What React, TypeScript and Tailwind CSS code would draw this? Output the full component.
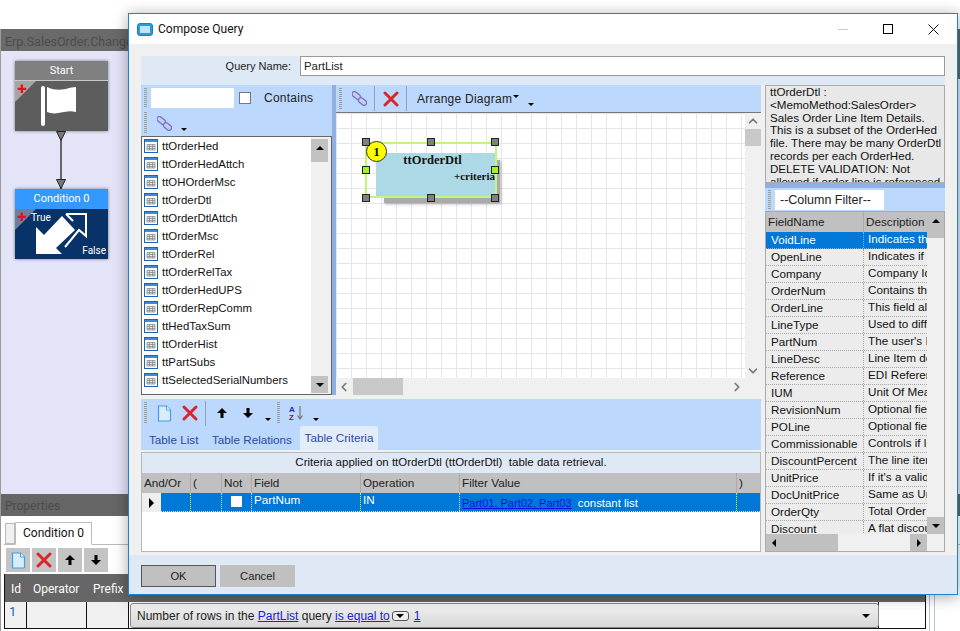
import { ChevronDown, ChevronLeft, ChevronRight, ChevronUp } from 'lucide-react';

const tables = [
  'ttOrderHed',
  'ttOrderHedAttch',
  'ttOHOrderMsc',
  'ttOrderDtl',
  'ttOrderDtlAttch',
  'ttOrderMsc',
  'ttOrderRel',
  'ttOrderRelTax',
  'ttOrderHedUPS',
  'ttOrderRepComm',
  'ttHedTaxSum',
  'ttOrderHist',
  'ttPartSubs',
  'ttSelectedSerialNumbers',
];

const fields = [
  ['VoidLine', 'Indicates that the line'],
  ['OpenLine', 'Indicates if the line'],
  ['Company', 'Company Identifier'],
  ['OrderNum', 'Contains the order'],
  ['OrderLine', 'This field along'],
  ['LineType', 'Used to differ'],
  ['PartNum', "The user's Id"],
  ['LineDesc', 'Line Item desc'],
  ['Reference', 'EDI Reference'],
  ['IUM', 'Unit Of Measure'],
  ['RevisionNum', 'Optional field'],
  ['POLine', 'Optional field'],
  ['Commissionable', 'Controls if line'],
  ['DiscountPercent', 'The line item'],
  ['UnitPrice', "If it's a valid"],
  ['DocUnitPrice', 'Same as Unit'],
  ['OrderQty', 'Total Order'],
  ['Discount', 'A flat discount'],
];

const grip =
  'w-[3px] shrink-0 bg-[repeating-linear-gradient(to_bottom,#9c9c9c_0,#9c9c9c_1px,transparent_1px,transparent_2px)]';

const TableIcon = () => (
  <svg width="14" height="14" viewBox="0 0 14 14" className="shrink-0">
    <rect x="0.5" y="0.5" width="13" height="13" fill="#fff" stroke="#1c62b8" />
    <rect x="1" y="1" width="12" height="2" fill="#3f8ae0" />
    <path d="M3 5.5h8v5.5H3zM3 7.5h8M3 9.5h8M5.5 5.5v5.5M8.5 5.5v5.5" fill="#e8e8e8" stroke="#8a8a8a" strokeWidth="0.8" />
  </svg>
);

const NewDoc = () => (
  <svg width="15" height="17" viewBox="0 0 15 17">
    <path d="M1.5 1h8l4 4v10a1 1 0 0 1-1 1h-11z" fill="#d8ecfb" stroke="#3ca0ea" strokeWidth="1.2" />
    <path d="M9.5 1v4h4" fill="#fff" stroke="#3ca0ea" />
  </svg>
);

const RedX = () => (
  <svg width="16" height="16" viewBox="0 0 16 16">
    <path d="M2 2l12 12M14 2L2 14" stroke="#d9262c" strokeWidth="3" strokeLinecap="round" />
  </svg>
);

const Arrow = ({ down = false }: { down?: boolean }) => (
  <svg width="10" height="10" viewBox="0 0 10 10">
    <path d={down ? 'M3.5 0h3v5H10L5 10 0 5h3.500z' : 'M3.5 10h3V5H10L5 0 0 5h3.500z'} fill="#000" />
  </svg>
);

const LinkIcon = () => (
  <svg width="15" height="15" viewBox="0 0 15 15">
    <rect x="-0.5" y="2" width="9.500" height="5" rx="2.500" transform="rotate(40 4.250 4.500)" fill="#c9cbf0" stroke="#7275c4" strokeWidth="1.300" />
    <rect x="6" y="8" width="9" height="5" rx="2.500" transform="rotate(40 10.500 10.500)" fill="#c9cbf0" stroke="#7275c4" strokeWidth="1.300" />
  </svg>
);

const Caret = () => <div className="w-0 h-0 border-x-[3px] border-x-transparent border-t-[3px] border-t-black" />;

const ScrollCaret = ({ up = false }: { up?: boolean }) => (
  <div className={`w-0 h-0 border-x-[4px] border-x-transparent ${up ? 'border-b-[4px] border-b-black' : 'border-t-[4px] border-t-black'}`} />
);

const Handle = ({ cls, green = false }: { cls: string; green?: boolean }) => (
  <div className={`absolute w-[8px] h-[8px] border border-[#222] ${green ? 'bg-[#a4f028]' : 'bg-[#808080]'} ${cls}`} />
);

const CornerPlus = ({ color }: { color: string }) => (
  <>
    <div className={`absolute left-0 top-[20px] w-0 h-0 border-t-[21px] border-r-[21px] border-r-transparent ${color}`} />
    <div className="absolute left-[2px] top-[22px] text-[#e8101c] font-black text-[17px] leading-[11px]">+</div>
  </>
);

const ConnectorHead = ({ cls }: { cls: string }) => (
  <svg width="10" height="10" viewBox="0 0 10 10" className={`absolute left-[41px] ${cls}`}>
    <path d="M0.500 0.500h9L5 9.500z" fill="#777" stroke="#222" />
  </svg>
);

function Backdrop() {
  return (
    <div className="flex flex-col h-[631px] border-l border-l-[#9a9a9a] bg-white">
      <div className="h-[29px] shrink-0 bg-white -ml-px" />
      <div className="h-[22px] shrink-0 bg-[#6a6a6a] text-[#4c4c4c] text-[12.5px] leading-[26px] pl-[4px] whitespace-nowrap overflow-hidden font-['Roboto',sans-serif]">
        Erp.SalesOrder.ChangePartNum
      </div>
      <div className="h-[443px] shrink-0 bg-[#e3e4f8] pl-[14px] pt-[10px] flex flex-col items-start">
        <div className="relative w-[93px] h-[70px] bg-[#5d5d5d] shadow-[0_0_3px_rgba(0,0,0,0.5)]">
          <div className="h-[20px] bg-[#808080] border-b border-b-[#c8c8c8] text-white text-[11px] leading-[19px] text-center font-['Roboto',sans-serif]">
            Start
          </div>
          <CornerPlus color="border-t-[#a6a6a6]" />
          <svg width="45" height="42" viewBox="0 0 45 42" className="absolute left-[26px] top-[24px]">
            <rect x="0" y="1" width="4" height="40" rx="2" fill="#fff" />
            <path d="M6 2c8 4 16 3 22 1 4-1 6-1 7-1v25c-6-2-12 0-18 1-4 1-8 0-11-1z" fill="#fff" />
          </svg>
        </div>
        <div className="relative w-[93px] h-[58px] shrink-0">
          <div className="absolute left-[45px] top-0 w-[2px] h-full bg-[#666]" />
          <ConnectorHead cls="top-0" />
          <ConnectorHead cls="bottom-0" />
        </div>
        <div className="relative w-[93px] h-[70px] bg-[#083369] shadow-[0_0_3px_rgba(0,0,0,0.5)]">
          <div className="h-[20px] bg-[#3399ff] text-white text-[11px] leading-[19px] text-center font-['Roboto',sans-serif]">
            Condition 0
          </div>
          <CornerPlus color="border-t-[#6b7f9e]" />
          <div className="absolute left-[16px] top-[21px] text-white text-[10px] font-['Roboto',sans-serif]">True</div>
          <div className="absolute right-[2px] bottom-[1px] text-white text-[10px] font-['Roboto',sans-serif]">False</div>
          <svg width="60" height="50" viewBox="0 0 60 50" className="absolute left-[15px] top-[20px]">
            <path d="M6 18l8 8L32 7l13 14-19 18 6 6H6z" fill="#fff" />
            <path d="M36 5h20v22l-7-6-14 17M36 5l7 7" fill="none" stroke="#fff" strokeWidth="2" />
          </svg>
        </div>
      </div>
      <div className="h-[22px] shrink-0 bg-[#666] text-[#4c4c4c] text-[12px] leading-[24px] pl-[4px] font-['Roboto',sans-serif]">Properties</div>
      <div className="flex-1 flex flex-col pl-[3px] font-['Roboto',sans-serif]">
        <div className="h-[29px] shrink-0 flex items-end border-b border-b-[#bbb] pl-[1px]">
          <div className="w-[10px] h-[21px] border border-[#bbb] bg-[#f0f0f0]" />
          <div className="w-[77px] h-[23px] -mb-px border border-[#bbb] border-b-white bg-white text-[12px] text-[#111] leading-[21px] text-center">Condition 0</div>
        </div>
        <div className="h-[24px] shrink-0 flex gap-[2px] pl-[2px] mt-[3px]">
          <div className="w-[24px] h-full bg-[#c4c4c4] flex items-center justify-center"><NewDoc /></div>
          <div className="w-[24px] h-full bg-[#c4c4c4] flex items-center justify-center"><RedX /></div>
          <div className="w-[24px] h-full bg-[#c4c4c4] flex items-center justify-center"><Arrow /></div>
          <div className="w-[24px] h-full bg-[#c4c4c4] flex items-center justify-center"><Arrow down /></div>
        </div>
        <div className="w-[922px] mt-[2px] border-x border-x-[#111] border-b border-b-[#111]">
          <div className="h-[28px] bg-[#666] flex text-white text-[12px] leading-[30px]">
            <div className="w-[22px] pl-[6px]">Id</div>
            <div className="w-[60px] pl-[6px]">Operator</div>
            <div className="w-[42px] pl-[6px]">Prefix</div>
          </div>
          <div className="h-[26px] flex bg-white text-[13px]">
            <div className="w-[22px] bg-[#f0f0f0] border-r border-r-[#111] pl-[4px] text-[#1a5fb4]">1</div>
            <div className="w-[60px] bg-[#f0f0f0] border-r border-r-[#111]" />
            <div className="w-[42px] bg-[#f0f0f0] border-r border-r-[#111]" />
            <div className="flex-1 border-r border-r-[#111]" />
            <div className="w-[46px]" />
          </div>
        </div>
      </div>
      <div className="absolute right-0 top-[29px] w-[2px] h-[50px] bg-[#666]" />
      <div className="absolute left-[929px] top-[595px] w-px h-[36px] bg-[#b8c4dc]" />
      <div className="absolute left-[934px] top-[595px] w-px h-[36px] bg-[#b8c4dc]" />
    </div>
  );
}

function Combo() {
  return (
    <div className="absolute left-[130px] top-[603px] w-[749px] h-[25px] rounded-[3px] border border-[#8a8a8a] bg-[linear-gradient(#f4f4f4,#e4e4e4_50%,#d8d8d8)] flex items-center pl-[6px] pr-[8px] text-[12px] text-[#222] font-['Liberation_Sans',sans-serif] whitespace-pre">
      <span>Number of rows in the </span>
      <span className="text-[#2020e0] underline">PartList</span>
      <span> query </span>
      <span className="text-[#2020e0] underline">is equal to</span>
      <span className="ml-[2px] w-[17px] h-[10px] rounded-[3px] border border-[#555] bg-[#eee] flex items-center justify-center"><ScrollCaret /></span>
      <span className="ml-[5px] text-[#2020e0] underline">1</span>
      <span className="ml-auto"><ScrollCaret /></span>
    </div>
  );
}

function LeftPane() {
  return (
    <div className="w-[191px] shrink-0 flex flex-col">
      <div className="h-[51px] bg-[#bcd8fd] shrink-0 flex flex-col">
        <div className="flex items-center h-[25px] pl-[3px]">
          <div className={`${grip} h-[20px]`} />
          <div className="ml-[4px] w-[83px] h-[20px] bg-white" />
          <div className="ml-[5px] w-[12px] h-[12px] border border-[#777] bg-white" />
          <span className="ml-[13px] text-[12px] tracking-[0.25px] text-[#222]">Contains</span>
        </div>
        <div className="flex items-center h-[26px] pl-[3px]">
          <div className={`${grip} h-[22px]`} />
          <div className="ml-[10px]"><LinkIcon /></div>
          <div className="ml-[9px] mt-[12px]"><Caret /></div>
        </div>
      </div>
      <div className="flex-1 min-h-0 flex bg-white border border-[#666] overflow-hidden">
        <div className="w-[169px] shrink-0 text-[11.4px]">
          {tables.map((t) => (
            <div key={t} className="h-[18px] flex items-center pl-[2px] gap-[4px] text-[#111] whitespace-nowrap">
              <TableIcon />
              <span className="pt-[2px]">{t}</span>
            </div>
          ))}
        </div>
        <div className="w-[20px] bg-[#f0f0f0] flex flex-col pr-[3px] pt-[2px] pb-[1px]">
          <div className="h-[23px] bg-[#c2c2c2] flex justify-center pt-[7px]"><ScrollCaret up /></div>
          <div className="flex-1" />
          <div className="h-[17px] bg-[#c2c2c2] flex justify-center items-center"><ScrollCaret /></div>
        </div>
      </div>
    </div>
  );
}

function Diagram() {
  return (
    <div className="flex-1 flex flex-col min-w-0">
      <div className="h-[27px] bg-[#bcd8fd] shrink-0 flex items-center pl-[3px]">
        <div className={`${grip} h-[22px]`} />
        <div className="ml-[10px]"><LinkIcon /></div>
        <div className="ml-[7px] w-px h-[25px] bg-[#8ea2bd]" />
        <div className="ml-[8px]"><RedX /></div>
        <div className="ml-[7px] w-px h-[25px] bg-[#8ea2bd]" />
        <span className="ml-[10px] text-[12px] tracking-[0.25px] text-[#222]">Arrange Diagram</span>
        <div className="ml-[1px] mb-[4px]"><Caret /></div>
        <div className="ml-[9px] mt-[12px]"><Caret /></div>
      </div>
      <div className="flex-1 min-h-0 border-t border-t-[#777] flex flex-col bg-[#f0f0f0]">
        <div className="flex-1 min-h-0 flex">
          <div className="relative flex-1 bg-white bg-[linear-gradient(#e6e6e6_1px,transparent_1px),linear-gradient(90deg,#e6e6e6_1px,transparent_1px)] bg-[size:15px_15px] font-['Liberation_Serif',serif] font-bold text-[#111]">
            <div className="absolute left-[48px] top-[47px] w-[116px] h-[43px] bg-[#aaa] shadow-[1px_1px_3px_rgba(0,0,0,0.3)]" />
            <div className="absolute left-[40px] top-[40px] w-[121px] h-[44px] bg-[#add8e6]" />
            <div className="absolute left-[40px] top-[40px] w-[121px] text-center text-[12.5px] leading-[15px] pr-[8px]">ttOrderDtl</div>
            <div className="absolute left-[40px] top-[56px] w-[119px] text-right text-[11px] leading-[14px]">+criteria</div>
            <div className="absolute left-[29px] top-[29px] w-[132px] h-[56px] border-2 border-[#c2f57e]" />
            <div className="absolute left-[30px] top-[28px] w-[21px] h-[21px] rounded-full bg-[#ffff00] border border-[#333] text-center text-[13px] leading-[19px]">1</div>
            <Handle cls="left-[26px] top-[25px]" />
            <Handle cls="left-[91px] top-[25px]" />
            <Handle cls="left-[155px] top-[25px]" />
            <Handle green cls="left-[26px] top-[53px]" />
            <Handle green cls="left-[155px] top-[53px]" />
            <Handle cls="left-[26px] top-[81px]" />
            <Handle cls="left-[91px] top-[81px]" />
            <Handle cls="left-[155px] top-[81px]" />
          </div>
          <div className="w-[16px] shrink-0 flex flex-col items-center text-[#777]">
            <ChevronUp size={14} strokeWidth={3} className="mt-[1px]" />
            <div className="w-full h-[17px] bg-[#c8c8c8] mt-[1px]" />
            <div className="flex-1" />
            <ChevronDown size={14} strokeWidth={3} />
          </div>
        </div>
        <div className="h-[17px] shrink-0 flex items-center text-[#777] pr-[17px]">
          <ChevronLeft size={14} strokeWidth={3} className="ml-[1px]" />
          <div className="ml-[2px] w-[50px] h-full bg-[#c8c8c8]" />
          <div className="flex-1" />
          <ChevronRight size={14} strokeWidth={3} />
        </div>
      </div>
    </div>
  );
}

function CriteriaPane() {
  return (
    <div className="flex flex-col mt-[4px]">
      <div className="h-[51px] bg-[#bcd8fd] flex flex-col shrink-0">
        <div className="h-[28px] flex items-center pl-[3px]">
          <div className={`${grip} h-[22px]`} />
          <div className="ml-[10px]"><NewDoc /></div>
          <div className="ml-[10px]"><RedX /></div>
          <div className="ml-[7px] w-px h-[25px] bg-[#8ea2bd]" />
          <div className="ml-[11px]"><Arrow /></div>
          <div className="ml-[16px]"><Arrow down /></div>
          <div className="ml-[12px] mt-[13px]"><Caret /></div>
          <div className="ml-[6px]"><div className={`${grip} h-[22px]`} /></div>
          <svg width="16" height="16" viewBox="0 0 16 16" className="ml-[9px]">
            <text x="0" y="7" fontSize="8" fontWeight="700" fill="#2424b8" fontFamily="Liberation Sans, sans-serif">A</text>
            <text x="0" y="15" fontSize="8" fontWeight="700" fill="#92124e" fontFamily="Liberation Sans, sans-serif">Z</text>
            <path d="M11 1v12M8.500 10.500L11 14l2.500-3.500" stroke="#777" fill="none" strokeWidth="1.200" />
          </svg>
          <div className="ml-[8px] mt-[13px]"><Caret /></div>
        </div>
        <div className="h-[23px] flex items-end text-[#2a4a9c]">
          <div className="w-[8px]" />
          <div className="w-[63px] h-[21px] leading-[22px]">Table List</div>
          <div className="w-[88px] h-[21px] leading-[22px]">Table Relations</div>
          <div className="w-[78px] h-[24px] bg-[#e3edfa] rounded-t-[3px] text-center leading-[23px]">Table Criteria</div>
        </div>
      </div>
      <div className="mt-[2px] h-[100px] border border-[#b8b8b8] bg-white flex flex-col">
        <div className="h-[20px] bg-[#dfe8f5] text-center text-[#111] leading-[19px] text-[11.5px] whitespace-pre">Criteria applied on ttOrderDtl (ttOrderDtl)  table data retrieval.</div>
        <div className="h-[20px] bg-[#c0c0c0] flex text-[#222] leading-[20px] [&>div]:pl-[2px]">
          <div className="w-[49px] border-r border-r-[#aaa]">And/Or</div>
          <div className="w-[31px] border-r border-r-[#aaa]">(</div>
          <div className="w-[30px] border-r border-r-[#aaa]">Not</div>
          <div className="w-[109px] border-r border-r-[#aaa]">Field</div>
          <div className="w-[99px] border-r border-r-[#aaa]">Operation</div>
          <div className="w-[277px] border-r border-r-[#aaa]">Filter Value</div>
          <div className="flex-1">)</div>
        </div>
        <div className="h-[19px] flex text-white leading-[14px]">
          <div className="w-[19px] bg-[#eeeeee] flex items-center justify-center">
            <div className="w-0 h-0 border-y-[5px] border-y-transparent border-l-[5px] border-l-black" />
          </div>
          <div className="flex-1 flex bg-[#0078d7] border-b border-dotted border-b-[#cfe6fb]">
            <div className="w-[30px] border-r border-dotted border-r-[#cfe6fb]" />
            <div className="w-[31px] border-r border-dotted border-r-[#cfe6fb]" />
            <div className="w-[30px] border-r border-dotted border-r-[#cfe6fb] flex justify-center pt-[3px]">
              <div className="w-[11px] h-[11px] bg-white" />
            </div>
            <div className="w-[109px] border-r border-dotted border-r-[#cfe6fb] pl-[2px]">PartNum</div>
            <div className="w-[99px] border-r border-dotted border-r-[#cfe6fb] pl-[2px]">IN</div>
            <div className="w-[277px] border-r border-dotted border-r-[#cfe6fb] pl-[2px] pt-[3px] whitespace-pre">
              <span className="text-[#1010e0] underline text-[11px]">Part01, Part02, Part03</span>
              <span className="text-[11.4px]">  constant list</span>
            </div>
            <div className="flex-1" />
          </div>
        </div>
      </div>
    </div>
  );
}

function RightPane() {
  return (
    <div className="w-[180px] shrink-0 flex flex-col">
      <div className="h-[98px] shrink-0 bg-[#e8e8e8] border border-[#aaa] overflow-hidden pl-[4px] pr-[1px] text-[#111] text-[11.6px] leading-[12.800px]">
        ttOrderDtl : &lt;MemoMethod:SalesOrder&gt; Sales Order Line Item Details. This is a subset of the OrderHed file. There may be many OrderDtl records per each OrderHed. DELETE VALIDATION: Not allowed if order line is referenced in
      </div>
      <div className="h-[5px] shrink-0 bg-[#8fb0e0]" />
      <div className="h-[23px] shrink-0 bg-[#bcd8fd] flex items-center pl-[3px]">
        <div className={`${grip} h-[20px]`} />
        <div className="ml-[4px] w-[109px] h-[20px] bg-white text-[#222] text-[12.5px] leading-[20px] pl-[5px]">--Column Filter--</div>
      </div>
      <div className="flex-1 min-h-0 border border-[#aaa] bg-[#f0f0f0] flex flex-col">
        <div className="flex-1 min-h-0 flex">
          <div className="w-[161px] shrink-0 overflow-hidden">
            <div className="h-[20px] bg-[#c0c0c0] flex text-[#222] leading-[20px]">
              <div className="w-[98px] pl-[2px] border-r border-r-[#aaa]">FieldName</div>
              <div className="pl-[2px]">Description</div>
            </div>
            {fields.map(([name, desc], i) => (
              <div key={name} className={`h-[17px] flex border-b border-dotted border-b-[#a8a8a8] ${i === 0 ? 'bg-[#0078d7] text-white' : 'bg-[#ececec] text-[#111]'}`}>
                <div className="w-[98px] shrink-0 pl-[5px] leading-[15px] border-r border-dotted border-r-[#a8a8a8] whitespace-nowrap overflow-hidden">{name}</div>
                <div className="flex-1 pl-[4px] leading-[14px] whitespace-nowrap overflow-hidden">{desc}</div>
              </div>
            ))}
          </div>
          <div className="flex-1 flex flex-col">
            <div className="h-[26px] bg-[#c0c0c0] flex justify-center pt-[7px]"><ScrollCaret up /></div>
            <div className="flex-1" />
            <div className="h-[17px] bg-[#c0c0c0] flex justify-center items-center"><ScrollCaret /></div>
          </div>
        </div>
        <div className="h-[17px] shrink-0 flex">
          <div className="w-[72px] bg-[#c0c0c0] flex items-center pl-[6px]">
            <div className="w-0 h-0 border-y-[4px] border-y-transparent border-r-[4px] border-r-black" />
          </div>
          <div className="w-[72px]" />
          <div className="w-[17px] bg-[#c0c0c0] flex items-center justify-center">
            <div className="w-0 h-0 border-y-[4px] border-y-transparent border-l-[4px] border-l-black" />
          </div>
        </div>
      </div>
    </div>
  );
}

function Dialog() {
  return (
    <div className="absolute left-[128px] top-[13px] w-[830px] h-[582px] border border-[#1c82d4] bg-[#f0f0f0] shadow-[0_2px_14px_rgba(0,0,0,0.35)] flex flex-col text-[11.7px] font-['Liberation_Sans',sans-serif]">
      <div className="h-[30px] shrink-0 bg-white flex items-center pl-[8px] text-[12px] text-[#111] font-['Roboto',sans-serif]">
        <svg width="16" height="13" viewBox="0 0 16 13">
          <rect x="0.500" y="0.500" width="15" height="12" rx="2.500" fill="#2c9ad8" stroke="#1a7fc2" />
          <rect x="3" y="3" width="10" height="7" fill="#bfe6fa" />
        </svg>
        <span className="ml-[5px]">Compose Query</span>
        <div className="ml-auto flex items-center">
          <div className="w-[10px] h-px bg-[#c8c8c8] mr-[35px]" />
          <div className="w-[10px] h-[10px] border border-black mr-[35px]" />
          <svg width="11" height="11" viewBox="0 0 11 11" className="mr-[18px]">
            <path d="M0.500 0.500l10 10M10.500 0.500l-10 10" stroke="#111" strokeWidth="1" />
          </svg>
        </div>
      </div>
      <div className="flex-1 min-h-0 flex flex-col pt-[12px] px-[12px]">
        <div className="h-[29px] shrink-0 bg-[#dfe8f5] flex items-start">
          <div className="w-[151px] pr-[1px] text-right text-[11px] leading-[20px] text-[#222]">Query Name:</div>
          <div className="ml-[8px] flex-1 h-[20px] border border-[#999] bg-white text-[#222] text-[11.4px] leading-[18px] pl-[3px]">PartList</div>
        </div>
        <div className="h-[467px] shrink-0 flex">
          <div className="w-[620px] shrink-0 flex flex-col">
            <div className="h-[310px] shrink-0 flex">
              <LeftPane />
              <div className="w-[4px] shrink-0 bg-[#8fb0e0]" />
              <Diagram />
            </div>
            <CriteriaPane />
          </div>
          <div className="w-[4px] shrink-0" />
          <RightPane />
        </div>
      </div>
      <div className="h-[39px] shrink-0 bg-[#dfe8f5] flex items-start gap-[4px] pl-[12px] pt-[10px] text-[#222] text-[11.2px]">
        <div className="w-[75px] h-[22px] bg-[#c0c0c0] border border-[#555] text-center leading-[20px]">OK</div>
        <div className="w-[75px] h-[22px] bg-[#c0c0c0] text-center leading-[22px]">Cancel</div>
      </div>
    </div>
  );
}

export default function App() {
  return (
    <div className="relative w-[960px] h-[631px] overflow-hidden bg-white">
      <Backdrop />
      <Combo />
      <Dialog />
    </div>
  );
}
